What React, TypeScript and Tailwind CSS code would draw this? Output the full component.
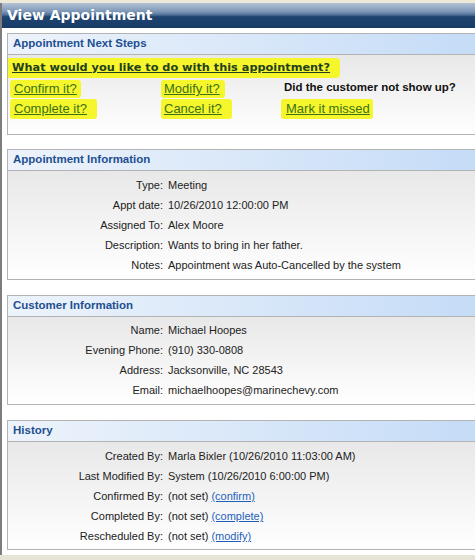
import React from "react";

type Row = { label: string; value: React.ReactNode };

function Panel({ title, children, className = "" }: { title: string; children: React.ReactNode; className?: string }) {
  return (
    <section className={`border border-[#b3b3b3] mr-[-4px] ${className}`}>
      <div className="h-[21px] border-b border-[#b3b3b3] bg-[linear-gradient(to_right,#edf3fb,#c5dcf7)] pl-[5px] flex items-center">
        <h2 className="text-[11.5px] font-bold text-[#1f4f90]">{title}</h2>
      </div>
      <div className="bg-[linear-gradient(to_bottom,#e8e8e8,#ffffff)]">{children}</div>
    </section>
  );
}

function InfoRows({ rows, className = "" }: { rows: Row[]; className?: string }) {
  return (
    <dl className={`grid grid-cols-[155px_1fr] gap-x-[5px] text-[11px] leading-[20px] text-[#222] ${className}`}>
      {rows.map((r) => (
        <React.Fragment key={r.label}>
          <dt className="text-right">{r.label}</dt>
          <dd className="whitespace-nowrap">{r.value}</dd>
        </React.Fragment>
      ))}
    </dl>
  );
}

function Mark({ children, className = "" }: { children: React.ReactNode; className?: string }) {
  return (
    <a href="#" className={`inline-block bg-[#f6f62c] text-[13px] leading-[18px] text-[#3b7216] underline rounded-[3px] ${className}`}>
      {children}
    </a>
  );
}

function HistLink({ children }: { children: React.ReactNode }) {
  return (
    <a href="#" className="text-[#1f5fbb] underline">
      {children}
    </a>
  );
}

export default function App() {
  return (
    <div className="w-[475px] h-[560px] overflow-hidden bg-[#e6e4d6] font-['Liberation_Sans',Arial,sans-serif]">
      <div className="h-[3px] bg-[#ece9d8]" />
      <div className="h-[552px] border-l-2 border-[#7d7d7d] bg-white">
        {/* title bar */}
        <header className="h-[25px] flex items-center pl-[5px] bg-[linear-gradient(to_bottom,#b4c3d6_0%,#7c96b6_35%,#4d6d96_48%,#1f4470_55%,#183c67_100%)]">
          <h1 className="text-[14px] font-bold text-white font-['DejaVu_Sans',Verdana,sans-serif]">View Appointment</h1>
        </header>

        <div className="pl-[5px] pt-[5px]">
          {/* Next steps */}
          <Panel title="Appointment Next Steps">
            <div className="pt-[3px] pb-[16px]">
              <div className="h-[20px] flex items-center">
                <a
                  href="#"
                  className="inline-block bg-[#f6f62c] pl-[4px] pr-[10px] text-[11.3px] leading-[20px] font-bold underline text-[#233f1c] font-['DejaVu_Sans',Verdana,sans-serif] rounded-r-[4px]"
                >
                  What would you like to do with this appointment?
                </a>
              </div>
              <div className="grid grid-cols-[151px_120px_1fr] grid-rows-[20px_20px] items-center pl-[2px]">
                <div><Mark className="pl-[4px] pr-[4px]">Confirm it?</Mark></div>
                <div><Mark className="pl-[3px] pr-[5px]">Modify it?</Mark></div>
                <div className="text-[11.5px] font-bold text-[#111] pl-[3px]">Did the customer not show up?</div>
                <div><Mark className="pl-[4px] pr-[10px] py-[1px]">Complete it?</Mark></div>
                <div><Mark className="pl-[3px] pr-[10px] py-[1px]">Cancel it?</Mark></div>
                <div><Mark className="pl-[5px] pr-[3px] py-[1px]">Mark it missed</Mark></div>
              </div>
            </div>
          </Panel>

          <Panel title="Appointment Information" className="mt-[14px]">
            <InfoRows
              className="pt-[4px] pb-[4px]"
              rows={[
                { label: "Type:", value: "Meeting" },
                { label: "Appt date:", value: "10/26/2010 12:00:00 PM" },
                { label: "Assigned To:", value: "Alex Moore" },
                { label: "Description:", value: "Wants to bring in her father." },
                { label: "Notes:", value: "Appointment was Auto-Cancelled by the system" },
              ]}
            />
          </Panel>

          <Panel title="Customer Information" className="mt-[15px]">
            <InfoRows
              className="pt-[3px] pb-[4px]"
              rows={[
                { label: "Name:", value: "Michael Hoopes" },
                { label: "Evening Phone:", value: "(910) 330-0808" },
                { label: "Address:", value: "Jacksonville, NC 28543" },
                { label: "Email:", value: "michaelhoopes@marinechevy.com" },
              ]}
            />
          </Panel>

          <Panel title="History" className="mt-[15px]">
            <InfoRows
              className="pt-[4px] pb-[3px]"
              rows={[
                { label: "Created By:", value: "Marla Bixler (10/26/2010 11:03:00 AM)" },
                { label: "Last Modified By:", value: "System (10/26/2010 6:00:00 PM)" },
                { label: "Confirmed By:", value: <>(not set) <HistLink>(confirm)</HistLink></> },
                { label: "Completed By:", value: <>(not set) <HistLink>(complete)</HistLink></> },
                { label: "Rescheduled By:", value: <>(not set) <HistLink>(modify)</HistLink></> },
              ]}
            />
          </Panel>
        </div>
      </div>
    </div>
  );
}
